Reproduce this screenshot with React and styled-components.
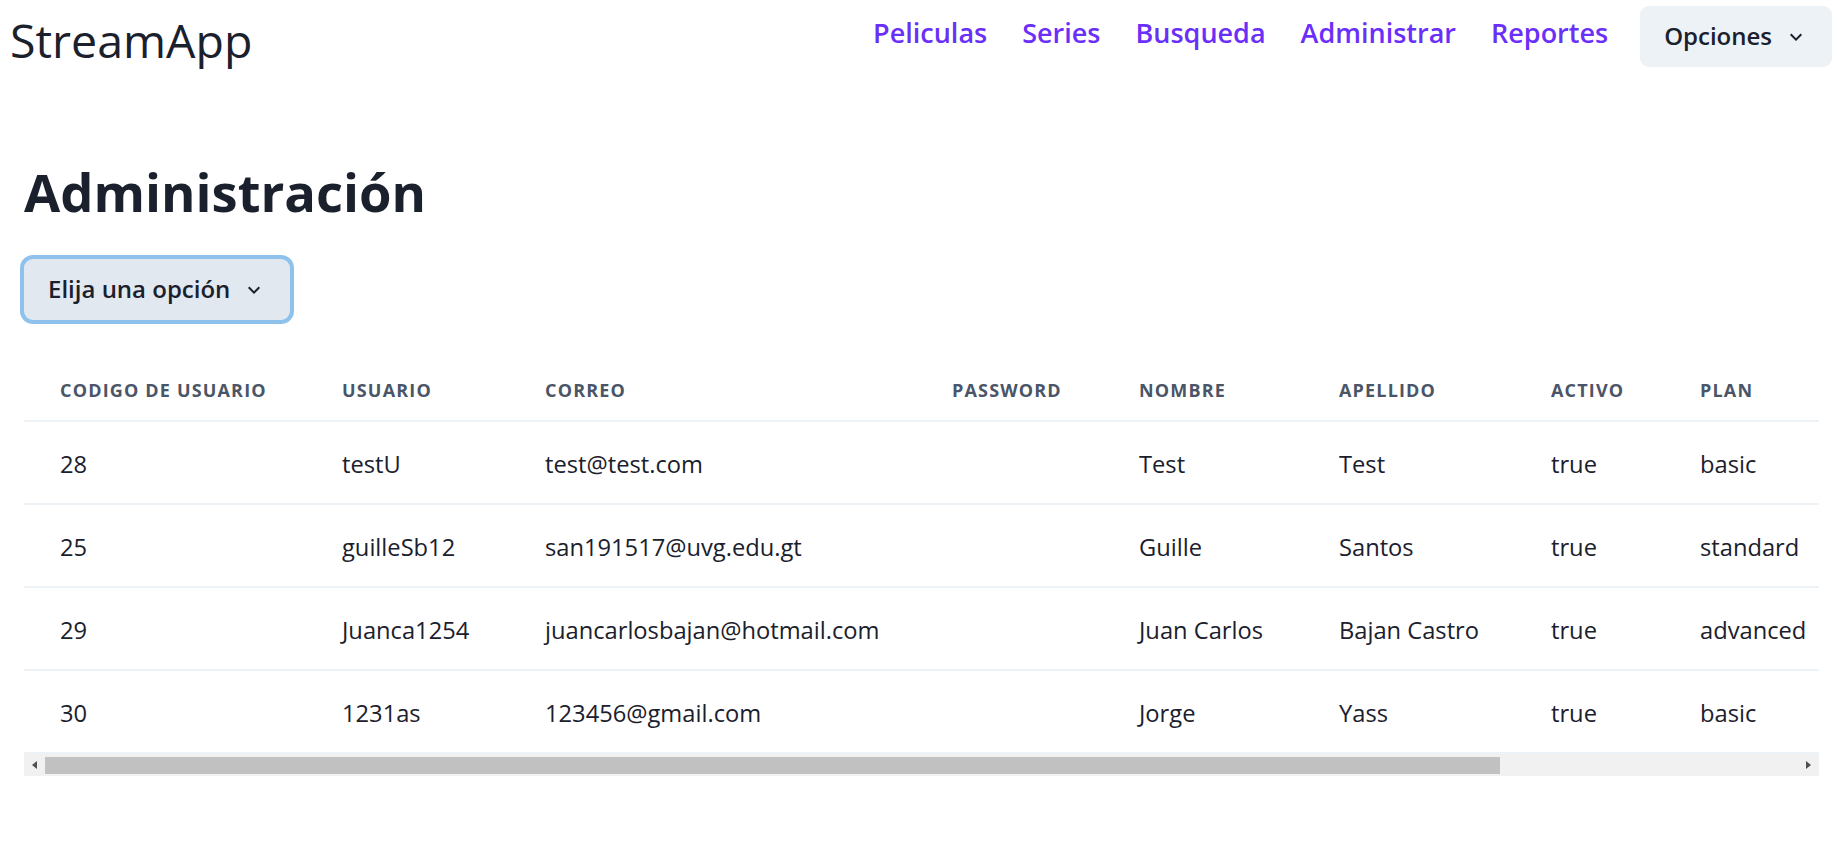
import React from "react";
import styled, { createGlobalStyle } from "styled-components";

const GlobalStyle = createGlobalStyle`
  * { box-sizing: border-box; }
  html, body { margin: 0; padding: 0; background: #ffffff; }
  body {
    font-family: "Open Sans", "Noto Sans", "Liberation Sans", sans-serif;
    color: #1a202c;
  }
`;

const Header = styled.header`
  display: flex;
  justify-content: space-between;
  align-items: flex-start;
  padding: 6px 5px 0 10px;
`;

const Logo = styled.div`
  font-size: 46.5px;
  line-height: 55px;
  font-weight: 400;
  color: #1a202c;
  margin-top: 7px;
`;

const Nav = styled.nav`
  display: flex;
  align-items: flex-start;
  gap: 32px;
`;

const NavLinks = styled.div`
  display: flex;
  gap: 35px;
  margin-top: 11px;
`;

const NavLink = styled.a`
  font-size: 27px;
  line-height: 32px;
  font-weight: 600;
  color: #6a2ff8;
  text-decoration: none;
  cursor: pointer;
`;

const MenuButton = styled.button`
  display: inline-flex;
  align-items: center;
  height: 61px;
  padding: 0 24px;
  border: none;
  border-radius: 9px;
  background: ${(p) => (p.$active ? "#E2E8F0" : "#EDF2F7")};
  box-shadow: ${(p) => (p.$focused ? "0 0 0 4px rgba(66, 153, 225, 0.6)" : "none")};
  font-family: "Open Sans", "Noto Sans", sans-serif;
  font-size: 24px;
  line-height: 1.2;
  font-weight: 600;
  color: #1a202c;
  cursor: pointer;
`;

const IconWrap = styled.span`
  display: inline-flex;
  margin-left: 12px;
  width: 24px;
  height: 24px;
`;

const Main = styled.main`
  padding: 0 18px 0 24px;
`;

const Title = styled.h1`
  margin: 92px 0 0 0;
  font-size: 52.5px;
  line-height: 64px;
  font-weight: 700;
  color: #1a202c;
`;

const ButtonRow = styled.div`
  display: flex;
  margin-top: 35px;
`;

const TableArea = styled.div`
  margin-top: 40px;
  width: 100%;
`;

const TableScroll = styled.div`
  overflow-x: hidden;
  width: 100%;
`;

const Table = styled.table`
  width: 2163px;
  table-layout: fixed;
  border-collapse: collapse;
`;

const Th = styled.th`
  text-align: left;
  padding: 18px 36px;
  font-size: 18px;
  line-height: 24px;
  font-weight: 700;
  letter-spacing: 0.065em;
  text-transform: uppercase;
  color: #4a5568;
  white-space: nowrap;
  border-bottom: 2px solid #edf2f7;
`;

const Td = styled.td`
  text-align: left;
  padding: 26px 36px 22px 36px;
  font-size: 23.7px;
  line-height: 33px;
  font-weight: 400;
  color: #1a202c;
  white-space: nowrap;
  border-bottom: 2px solid #edf2f7;
`;

const ScrollBar = styled.div`
  display: flex;
  height: 22px;
  background: #f1f1f1;
`;

const ScrollArrow = styled.div`
  flex: 0 0 21px;
  display: flex;
  align-items: center;
  justify-content: center;
  color: #505050;
`;

const ScrollTrack = styled.div`
  flex: 1;
  display: flex;
  padding: 3px 0 2px 0;
`;

const ScrollThumb = styled.div`
  height: 100%;
  background: #c1c1c1;
`;

const Chevron = () => (
  <svg viewBox="0 0 24 24" width="24" height="24" aria-hidden="true">
    <path fill="currentColor" d="M16.59 8.59L12 13.17 7.41 8.59 6 10l6 6 6-6z" />
  </svg>
);

const Arrow = ({ dir }) => (
  <svg viewBox="0 0 5 8" width="5" height="8" aria-hidden="true">
    <path fill="currentColor" d={dir === "left" ? "M5 0 L0 4 L5 8 Z" : "M0 0 L5 4 L0 8 Z"} />
  </svg>
);

const columns = [
  { key: "id", label: "Codigo de usuario", width: 282 },
  { key: "user", label: "Usuario", width: 203 },
  { key: "mail", label: "Correo", width: 407 },
  { key: "pass", label: "Password", width: 187 },
  { key: "name", label: "Nombre", width: 200 },
  { key: "last", label: "Apellido", width: 212 },
  { key: "active", label: "Activo", width: 149 },
  { key: "plan", label: "Plan", width: 523 },
];

const rows = [
  { id: "28", user: "testU", mail: "test@test.com", pass: "", name: "Test", last: "Test", active: "true", plan: "basic" },
  { id: "25", user: "guilleSb12", mail: "san191517@uvg.edu.gt", pass: "", name: "Guille", last: "Santos", active: "true", plan: "standard" },
  { id: "29", user: "Juanca1254", mail: "juancarlosbajan@hotmail.com", pass: "", name: "Juan Carlos", last: "Bajan Castro", active: "true", plan: "advanced" },
  { id: "30", user: "1231as", mail: "123456@gmail.com", pass: "", name: "Jorge", last: "Yass", active: "true", plan: "basic" },
];

const VISIBLE_WIDTH = 1795;
const TABLE_WIDTH = 2163;

export default function App() {
  const thumbPct = (VISIBLE_WIDTH / TABLE_WIDTH) * 100;
  return (
    <>
      <GlobalStyle />
      <Header>
        <Logo>StreamApp</Logo>
        <Nav>
          <NavLinks>
            <NavLink>Peliculas</NavLink>
            <NavLink>Series</NavLink>
            <NavLink>Busqueda</NavLink>
            <NavLink>Administrar</NavLink>
            <NavLink>Reportes</NavLink>
          </NavLinks>
          <MenuButton>
            Opciones
            <IconWrap>
              <Chevron />
            </IconWrap>
          </MenuButton>
        </Nav>
      </Header>
      <Main>
        <Title>Administración</Title>
        <ButtonRow>
          <MenuButton $active $focused>
            Elija una opción
            <IconWrap>
              <Chevron />
            </IconWrap>
          </MenuButton>
        </ButtonRow>
        <TableArea>
          <TableScroll>
            <Table>
              <colgroup>
                {columns.map((c) => (
                  <col key={c.key} style={{ width: c.width }} />
                ))}
              </colgroup>
              <thead>
                <tr>
                  {columns.map((c) => (
                    <Th key={c.key}>{c.label}</Th>
                  ))}
                </tr>
              </thead>
              <tbody>
                {rows.map((r) => (
                  <tr key={r.id}>
                    {columns.map((c) => (
                      <Td key={c.key}>{r[c.key]}</Td>
                    ))}
                  </tr>
                ))}
              </tbody>
            </Table>
          </TableScroll>
          <ScrollBar>
            <ScrollArrow>
              <Arrow dir="left" />
            </ScrollArrow>
            <ScrollTrack>
              <ScrollThumb style={{ width: `${thumbPct}%` }} />
            </ScrollTrack>
            <ScrollArrow>
              <Arrow dir="right" />
            </ScrollArrow>
          </ScrollBar>
        </TableArea>
      </Main>
    </>
  );
}
